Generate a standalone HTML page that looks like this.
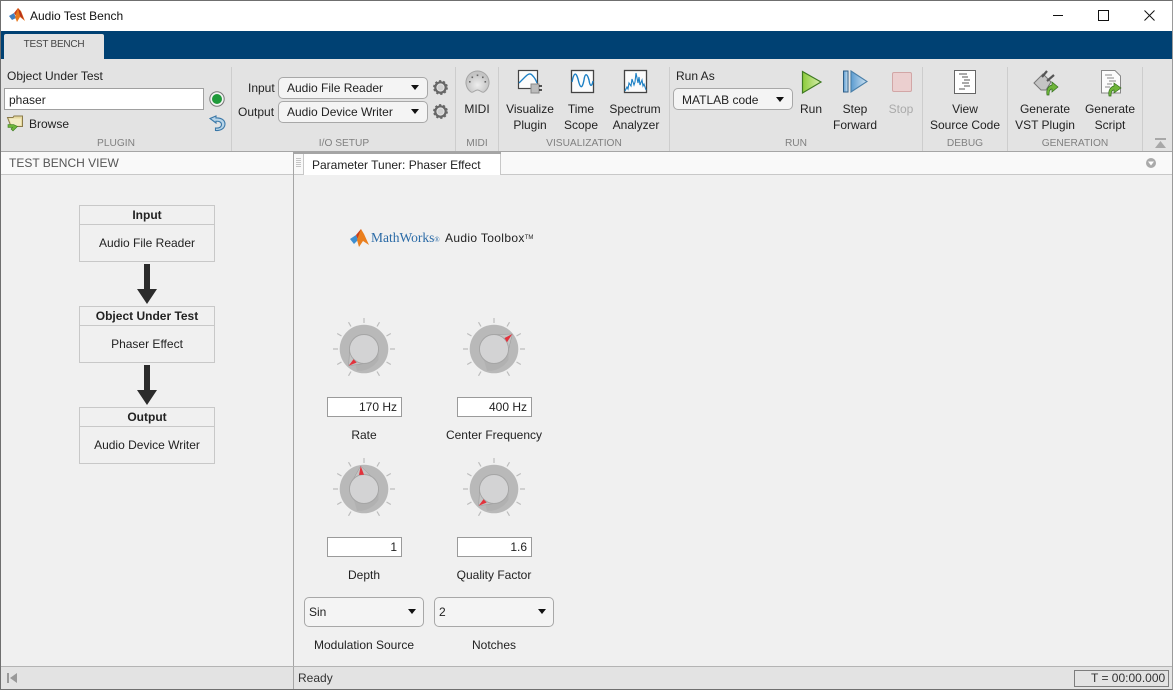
<!DOCTYPE html>
<html><head><meta charset="utf-8"><title>Audio Test Bench</title>
<style>
html,body{margin:0;padding:0}
body{width:1173px;height:690px;overflow:hidden;position:relative;background:#f0f0f0;font-family:"Liberation Sans",sans-serif;font-size:12px;color:#222}
.b{position:absolute;box-sizing:border-box}
.t{position:absolute;white-space:nowrap;line-height:16px;height:16px}
.c{position:absolute;white-space:nowrap;line-height:16px;height:16px;width:200px;text-align:center}
.g{color:#808080;font-size:10.2px !important}
.sep{position:absolute;top:67px;width:1px;height:84px;background:#cdcdcd}
.dd{position:absolute;box-sizing:border-box;background:#f4f4f4;border:1px solid #a8a8a8;border-radius:5px}
.arr{position:absolute;width:0;height:0;border-left:4px solid transparent;border-right:4px solid transparent;border-top:5px solid #111}
.ed{position:absolute;box-sizing:border-box;background:#fff;border:1px solid #9a9a9a;width:75px;height:20px;line-height:18px;text-align:right;padding-right:4px}
.box{position:absolute;box-sizing:border-box;left:79px;width:136px;border:1px solid #c8c8c8}
.box .h{height:19px;line-height:19px;font-weight:bold;text-align:center;border-bottom:1px solid #c8c8c8;box-sizing:border-box}
.box .v{line-height:36px;text-align:center}
svg{position:absolute;overflow:visible}
</style></head><body>

<!-- title bar -->
<div class="b" style="left:0;top:0;width:1173px;height:31px;background:#fff"></div>
<svg style="left:9px;top:7px" width="17" height="16" viewBox="0 0 17 16"><polygon points="0,9 5,6 7,11 3,13" fill="#3f7fbf"/><polygon points="5,6 9,1 10,5 7,9" fill="#c9401c"/><polygon points="9,1 12,4 16,14 11,10 8,15 6,10" fill="#e8781e"/><polygon points="9,1 12,5 15,13 11,9" fill="#b8321a"/></svg>
<div class="t" style="left:30px;top:8px;color:#111">Audio Test Bench</div>
<div class="b" style="left:1053px;top:15px;width:10px;height:1px;background:#111"></div>
<div class="b" style="left:1098px;top:10px;width:11px;height:11px;border:1px solid #111"></div>
<svg style="left:1144px;top:10px" width="11" height="11"><path d="M0.5 0.5L10.5 10.5M10.5 0.5L0.5 10.5" stroke="#111" stroke-width="1" fill="none"/></svg>

<!-- tab strip -->
<div class="b" style="left:1px;top:31px;width:1172px;height:28px;background:#004173"></div>
<div class="b" style="left:4px;top:34px;width:100px;height:25px;background:#e3e3e3;border-radius:2px 2px 0 0"></div>
<div class="c" style="left:-46px;top:37px;font-size:10px;letter-spacing:-.25px;color:#444">TEST BENCH</div>

<!-- ribbon -->
<div class="b" style="left:1px;top:59px;width:1172px;height:92px;background:#e3e3e3"></div>
<div class="b" style="left:0;top:151px;width:1173px;height:1px;background:#a5a5a5"></div>
<div class="sep" style="left:231px"></div>
<div class="sep" style="left:455px"></div>
<div class="sep" style="left:498px"></div>
<div class="sep" style="left:669px"></div>
<div class="sep" style="left:922px"></div>
<div class="sep" style="left:1007px"></div>
<div class="sep" style="left:1142px"></div>

<!-- plugin -->
<div class="t" style="left:7px;top:68px">Object Under Test</div>
<div class="b" style="left:4px;top:88px;width:200px;height:22px;background:#fff;border:1px solid #a0a0a0"></div>
<div class="t" style="left:9px;top:92px">phaser</div>
<svg style="left:209px;top:91px" width="16" height="16"><circle cx="8" cy="8" r="7.2" fill="#f4f4f4" stroke="#777"/><circle cx="8" cy="8" r="5" fill="#1f9a3a"/></svg>
<svg style="left:7px;top:115px" width="17" height="17"><path d="M0.5 2.5H6L7 1H15.5V11.5H4Z" fill="#e6d9a0" stroke="#8a7a4a"/><path d="M2 3.5H14V10.5H5Z" fill="#f3ebc4"/><path d="M1 9.5H6.5L10.5 11.5L6 16L4 14L5.5 12.5H1Z" fill="#6fb53a" stroke="#3c7a20" stroke-width=".6"/></svg>
<div class="t" style="left:29px;top:116px">Browse</div>
<svg style="left:209px;top:115px" width="17" height="17"><path d="M1 3.5L7 1V3C12 2.5 16 5 16 9C16 13 12 16 6.5 15.5V13C10 13.5 12.5 12 12.5 9.5C12.5 7 10 6 7 6.3V8Z" fill="#b7d4e8" stroke="#3a78a8" stroke-width="1.1"/></svg>
<div class="c g" style="left:16px;top:136px">PLUGIN</div>

<!-- io -->
<div class="t" style="left:248px;top:80px">Input</div>
<div class="t" style="left:238px;top:104px">Output</div>
<div class="dd" style="left:278px;top:77px;width:150px;height:22px"></div>
<div class="t" style="left:287px;top:80px">Audio File Reader</div>
<div class="arr" style="left:411px;top:85px"></div>
<div class="dd" style="left:278px;top:101px;width:150px;height:22px"></div>
<div class="t" style="left:287px;top:104px">Audio Device Writer</div>
<div class="arr" style="left:411px;top:109px"></div>
<svg style="left:433px;top:80px" width="15" height="15" viewBox="0 0 15 15"><circle cx="7.5" cy="7.5" r="5.2" fill="none" stroke="#666" stroke-width="2.2"/><circle cx="7.5" cy="7.5" r="6.6" fill="none" stroke="#666" stroke-width="1.6" stroke-dasharray="2.2 2"/><circle cx="7.5" cy="7.5" r="3" fill="#cfcfcf"/></svg>
<svg style="left:433px;top:104px" width="15" height="15" viewBox="0 0 15 15"><circle cx="7.5" cy="7.5" r="5.2" fill="none" stroke="#666" stroke-width="2.2"/><circle cx="7.5" cy="7.5" r="6.6" fill="none" stroke="#666" stroke-width="1.6" stroke-dasharray="2.2 2"/><circle cx="7.5" cy="7.5" r="3" fill="#cfcfcf"/></svg>
<div class="c g" style="left:244px;top:136px">I/O SETUP</div>

<!-- midi -->
<svg style="left:465px;top:70px" width="25" height="25" viewBox="0 0 25 25"><defs><radialGradient id="mg" cx=".5" cy=".65"><stop offset="0" stop-color="#eee"/><stop offset="1" stop-color="#c4c4c4"/></radialGradient></defs><path d="M12.5 1A11.5 11.5 0 0 1 19 22C17 23.5 15.5 20 12.5 20C9.5 20 8 23.5 6 22A11.5 11.5 0 0 1 12.5 1Z" fill="url(#mg)" stroke="#a5a5a5"/><g fill="#666"><rect x="4" y="11" width="1.6" height="1.6"/><rect x="6.5" y="6.5" width="1.6" height="1.6"/><rect x="11.7" y="4.5" width="1.6" height="1.6"/><rect x="17" y="6.5" width="1.6" height="1.6"/><rect x="19.5" y="11" width="1.6" height="1.6"/></g></svg>
<div class="c" style="left:377px;top:101px">MIDI</div>
<div class="c g" style="left:377px;top:136px">MIDI</div>

<!-- visualization -->
<svg style="left:518px;top:70px" width="26" height="26"><rect x=".5" y=".5" width="19" height="18" fill="#fcfcfc" stroke="#444" stroke-width="1.2"/><path d="M1 13L7 7C10 4 12 3 14 5C16 7 18 10 19 13" fill="none" stroke="#1b7fc4" stroke-width="1.3"/><rect x="13" y="14" width="8" height="9" fill="#bbb" stroke="#888"/><path d="M21 16h3M21 20h3" stroke="#222" stroke-width="1.4"/></svg>
<svg style="left:571px;top:70px" width="24" height="24"><rect x=".5" y=".5" width="22" height="22" fill="#fcfcfc" stroke="#444" stroke-width="1.3"/><path d="M1 12C3 2 5 2 7 9C9 18 11 20 13 10C14 3 16 3 18 10C19 17 21 17 22 11" fill="none" stroke="#1b7fc4" stroke-width="1.4"/></svg>
<svg style="left:624px;top:70px" width="24" height="24"><rect x=".5" y=".5" width="22" height="22" fill="#fcfcfc" stroke="#444" stroke-width="1.3"/><path d="M1 21L3 17L4 19L5 13L7 16L8 9L10 15L11 12L12 3L14 13L15 7L16 15L18 10L19 16L20 14L22 20" fill="none" stroke="#1b7fc4" stroke-width="1.1"/></svg>
<div class="c" style="left:430px;top:101px">Visualize</div>
<div class="c" style="left:430px;top:117px">Plugin</div>
<div class="c" style="left:481px;top:101px">Time</div>
<div class="c" style="left:481px;top:117px">Scope</div>
<div class="c" style="left:535px;top:101px">Spectrum</div>
<div class="c" style="left:536px;top:117px">Analyzer</div>
<div class="c g" style="left:484px;top:136px">VISUALIZATION</div>

<!-- run -->
<div class="t" style="left:676px;top:68px">Run As</div>
<div class="dd" style="left:673px;top:88px;width:120px;height:22px"></div>
<div class="t" style="left:682px;top:92px">MATLAB code</div>
<div class="arr" style="left:776px;top:97px"></div>
<svg style="left:801px;top:70px" width="22" height="24" viewBox="0 0 22 24"><defs><linearGradient id="gr" x1="0" x2="1" y1="0" y2="0"><stop offset="0" stop-color="#8ccb3a"/><stop offset="1" stop-color="#d9efb0"/></linearGradient><linearGradient id="bl" x1="0" x2="1"><stop offset="0" stop-color="#5a9bd0"/><stop offset="1" stop-color="#cfe3f2"/></linearGradient></defs><polygon points="1.5,1.5 20,12 1.5,23" fill="url(#gr)" stroke="#3f7a22" stroke-width="1.2"/></svg>
<svg style="left:842px;top:70px" width="26" height="24" viewBox="0 0 26 24"><rect x="1.5" y="1" width="4.5" height="21" fill="url(#bl)" stroke="#2f5f88"/><polygon points="9,1 25,11.5 9,22" fill="url(#bl)" stroke="#4a7fa8" stroke-width="1.1"/></svg>
<div class="b" style="left:892px;top:72px;width:20px;height:20px;background:#ebcfcf;border:1px solid #d2a6a6;border-radius:2px"></div>
<div class="c" style="left:711px;top:101px">Run</div>
<div class="c" style="left:755px;top:101px">Step</div>
<div class="c" style="left:755px;top:117px">Forward</div>
<div class="c" style="left:801px;top:101px;color:#aaa">Stop</div>
<div class="c g" style="left:696px;top:136px">RUN</div>

<!-- debug -->
<svg style="left:954px;top:70px" width="22" height="24"><rect x=".5" y=".5" width="21" height="23" fill="#fff" stroke="#666"/><path d="M5 4h8M8 7h6M10 10h6M8 13h7M10 16h6M5 19h6" stroke="#555" stroke-width="1"/></svg>
<div class="c" style="left:865px;top:101px">View</div>
<div class="c" style="left:865px;top:117px">Source Code</div>
<div class="c g" style="left:865px;top:136px">DEBUG</div>

<!-- generation -->
<svg style="left:1033px;top:70px" width="26" height="26" viewBox="0 0 26 26"><polygon points="1,13 10,4 18,12 13,20 8,20" fill="#c4c4c4" stroke="#777"/><path d="M9 7L14 1M14 11L21 5" stroke="#555" stroke-width="2.2"/><path d="M14 25C13 20 15 16 19 15V12L25 17L19 22V19C17 19 16 21 16 25Z" fill="#6fb53a" stroke="#356f1f" stroke-width=".7"/></svg>
<svg style="left:1101px;top:70px" width="22" height="26" viewBox="0 0 22 26"><path d="M.5 .5H14L19.5 6V23H.5Z" fill="#fbfbfb" stroke="#888"/><path d="M4 5h7M6 8h7M8 11h7M6 14h5M4 17h5" stroke="#888"/><path d="M8 26C7 21 9 17 13 16V13L20 18L13 23V20C11 20 10 22 10 26Z" fill="#6fb53a" stroke="#356f1f" stroke-width=".7"/></svg>
<div class="c" style="left:945px;top:101px">Generate</div>
<div class="c" style="left:945px;top:117px">VST Plugin</div>
<div class="c" style="left:1010px;top:101px">Generate</div>
<div class="c" style="left:1010px;top:117px">Script</div>
<div class="c g" style="left:975px;top:136px">GENERATION</div>
<svg style="left:1155px;top:138px" width="12" height="12"><rect x="0" y="0" width="11" height="2" fill="#a8a8a8"/><polygon points="5.5,3 11,10 0,10" fill="#a8a8a8"/></svg>

<!-- panel headers -->
<div class="b" style="left:0;top:152px;width:1173px;height:22px;background:#f9f9f9"></div>
<div class="b" style="left:0;top:174px;width:1173px;height:1px;background:#c8c8c8"></div>
<div class="t" style="left:9px;top:155px;color:#555">TEST BENCH VIEW</div>
<div class="b" style="left:293px;top:152px;width:208px;height:2px;background:#a5a5a5"></div>
<div class="b" style="left:293px;top:152px;width:1px;height:515px;background:#a5a5a5"></div>
<div class="b" style="left:303px;top:154px;width:198px;height:21px;background:#fff;border-left:1px solid #c8c8c8;border-right:1px solid #c8c8c8"></div>
<svg style="left:296px;top:158px" width="5" height="10"><path d="M0 .5h5M0 2.5h5M0 4.5h5M0 6.5h5M0 8.5h5" stroke="#c4c4c4"/></svg>
<div class="t" style="left:312px;top:157px;color:#222">Parameter Tuner: Phaser Effect</div>
<svg style="left:1146px;top:158px" width="10" height="10"><circle cx="5" cy="5" r="5" fill="#aaa"/><polygon points="2,3.5 8,3.5 5,7.5" fill="#fff"/></svg>

<!-- left flow -->
<div class="box" style="top:205px;height:57px"><div class="h">Input</div><div class="v">Audio File Reader</div></div>
<div class="box" style="top:306px;height:57px"><div class="h">Object Under Test</div><div class="v">Phaser Effect</div></div>
<div class="box" style="top:407px;height:57px"><div class="h">Output</div><div class="v">Audio Device Writer</div></div>
<svg style="left:137px;top:264px" width="20" height="40"><path d="M7 0H13V25H20L10 40L0 25H7Z" fill="#2b2b2b"/></svg>
<svg style="left:137px;top:365px" width="20" height="40"><path d="M7 0H13V25H20L10 40L0 25H7Z" fill="#2b2b2b"/></svg>

<!-- logo -->
<svg style="left:350px;top:229px" width="20" height="18" viewBox="0 0 20 18"><polygon points="0,10 6,6 8,11 4,15" fill="#3f8fd0"/><polygon points="6,6 11,0 12,6 8,11" fill="#c9401c"/><polygon points="11,0 14,5 19,16 13,12 9,18 7,11" fill="#ea7f1e"/></svg>
<div class="t" style="left:371px;top:230px;font-family:'Liberation Serif',serif;font-size:13.5px;color:#2a6aa6">MathWorks<span style="font-size:7px">®</span></div>
<div class="t" style="left:445px;top:230px;color:#222;font-size:12px;letter-spacing:.35px">Audio Toolbox<span style="font-size:6px;vertical-align:3px;letter-spacing:0">TM</span></div>

<!-- knobs -->
<svg style="left:0;top:0" width="1173" height="690">
<defs>
<g id="ticks" stroke="#bdbdbd" stroke-width="1.2"><path d="M26 0H31M-26 0H-31M0 -26V-31M13 -22.5L15.5 -26.8M-13 -22.5L-15.5 -26.8M22.5 -13L26.8 -15.5M-22.5 -13L-26.8 -15.5M22.5 13L26.8 15.5M-22.5 13L-26.8 15.5M13 22.5L15.5 26.8M-13 22.5L-15.5 26.8"/></g>
<g id="cap"><path d="M-10 11A14.5 14.5 0 0 0 14.5 0V11A24 24 0 0 1 -7 22Z" fill="#a9a9a9" opacity=".45"/><circle r="14.5" fill="#d3d3d4" stroke="#a6a6a6" stroke-width=".9"/></g>
</defs>
<g transform="translate(364,349)"><use href="#ticks"/><circle r="24.3" fill="#b9b9b9"/><use href="#cap"/><polygon points="-15.3,16.7 -14.3,-2 2,14.3" fill="#c4c4c4" stroke="#999" stroke-width=".5"/><circle r="14.5" fill="#d3d3d4" stroke="#a6a6a6" stroke-width=".9"/><polygon points="-15.3,16.7 -10.5,10.3 -7.3,13.5" fill="#e2323c"/></g>
<g transform="translate(494,349)"><use href="#ticks"/><circle r="24.3" fill="#b9b9b9"/><use href="#cap"/><polygon points="18.3,-15 -3,-14.2 13.5,5" fill="#c4c4c4" stroke="#999" stroke-width=".5"/><circle r="14.5" fill="#d3d3d4" stroke="#a6a6a6" stroke-width=".9"/><polygon points="18.3,-15 10.5,-11 13,-6.8" fill="#e2323c"/></g>
<g transform="translate(364,489)"><use href="#ticks"/><circle r="24.3" fill="#b9b9b9"/><use href="#cap"/><polygon points="-3.3,-23 -13.5,-5 11,-9" fill="#c4c4c4" stroke="#999" stroke-width=".5"/><circle r="14.5" fill="#d3d3d4" stroke="#a6a6a6" stroke-width=".9"/><polygon points="-3.3,-23 -5,-14 0,-14.2" fill="#e2323c"/></g>
<g transform="translate(494,489)"><use href="#ticks"/><circle r="24.3" fill="#b9b9b9"/><use href="#cap"/><polygon points="-15.3,16.7 -14.3,-2 2,14.3" fill="#c4c4c4" stroke="#999" stroke-width=".5"/><circle r="14.5" fill="#d3d3d4" stroke="#a6a6a6" stroke-width=".9"/><polygon points="-15.3,16.7 -10.5,10.3 -7.3,13.5" fill="#e2323c"/></g>
</svg>

<div class="ed" style="left:327px;top:397px">170 Hz</div>
<div class="ed" style="left:457px;top:397px">400 Hz</div>
<div class="c" style="left:264px;top:427px">Rate</div>
<div class="c" style="left:394px;top:427px">Center Frequency</div>
<div class="ed" style="left:327px;top:537px">1</div>
<div class="ed" style="left:457px;top:537px">1.6</div>
<div class="c" style="left:264px;top:567px">Depth</div>
<div class="c" style="left:394px;top:567px">Quality Factor</div>
<div class="dd" style="left:304px;top:597px;width:120px;height:30px"></div>
<div class="t" style="left:309px;top:604px">Sin</div>
<div class="arr" style="left:408px;top:609px"></div>
<div class="dd" style="left:434px;top:597px;width:120px;height:30px"></div>
<div class="t" style="left:439px;top:604px">2</div>
<div class="arr" style="left:538px;top:609px"></div>
<div class="c" style="left:264px;top:637px">Modulation Source</div>
<div class="c" style="left:394px;top:637px">Notches</div>

<!-- status bar -->
<div class="b" style="left:0;top:666px;width:1173px;height:1px;background:#b4b4b4"></div>
<div class="b" style="left:1px;top:667px;width:1172px;height:22px;background:#e3e3e3"></div>
<div class="b" style="left:293px;top:667px;width:1px;height:22px;background:#a5a5a5"></div>
<svg style="left:7px;top:673px" width="11" height="10"><rect width="2" height="10" fill="#999"/><polygon points="10,0 10,10 3,5" fill="#999"/></svg>
<div class="t" style="left:298px;top:670px;color:#333">Ready</div>
<div class="b" style="left:1074px;top:670px;width:95px;height:17px;border:1px solid #7d7d7d"></div>
<div class="t" style="left:1091px;top:670px;color:#333">T = 00:00.000</div>

<!-- window border -->
<div class="b" style="left:0;top:0;width:1173px;height:690px;border:1px solid #6f6f6f;border-right-color:#9a9a9a;pointer-events:none"></div>
</body></html>
